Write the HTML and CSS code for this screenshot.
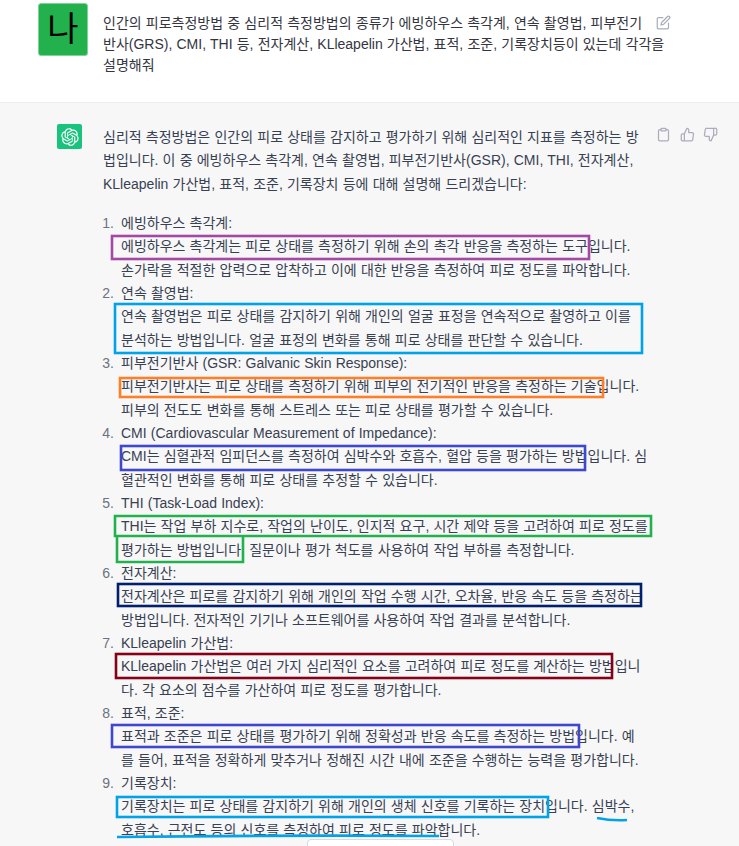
FILE: index.html
```html
<!DOCTYPE html>
<html lang="ko">
<head>
  <meta charset="UTF-8" />
  <meta name="viewport" content="width=device-width, initial-scale=1.0"/>
  <title>피로측정방법</title>
  <link rel="stylesheet" href="styles.css">
</head>

<body>
  <!-- User question -->
  <section class="msg msg-user">
    <div class="avatar-user">나</div>
    <p class="user-text">
      인간의 피로측정방법 중 심리적 측정방법의 종류가 에빙하우스 촉각계, 연속 촬영법, 피부전기<br>
      반사(GRS), CMI, THI 등, 전자계산, KLleapelin 가산법, 표적, 조준, 기록장치등이 있는데 각각을<br>
      설명해줘
    </p>
    <svg class="icon icon-edit" viewBox="0 0 24 24">
      <path d="M11 4H4a2 2 0 0 0-2 2v14a2 2 0 0 0 2 2h14a2 2 0 0 0 2-2v-7"/>
      <path d="M18.5 2.5a2.121 2.121 0 0 1 3 3L12 15l-4 1 1-4 9.5-9.5z"/>
    </svg>
  </section>

  <!-- Assistant answer -->
  <section class="msg msg-bot">
    <div class="avatar-bot">
      <svg viewBox="0 0 41 41">
        <path fill="#fff" d="M37.5324 16.8707C37.9808 15.5241 38.1363 14.0974 37.9886 12.6859C37.8409 11.2744 37.3934 9.91076 36.676 8.68622C35.6126 6.83404 33.9882 5.3676 32.0373 4.4985C30.0864 3.62941 27.9098 3.40259 25.8215 3.85078C24.8796 2.7893 23.7219 1.94125 22.4257 1.36341C21.1295 0.785575 19.7249 0.491269 18.3058 0.500197C16.1708 0.495044 14.0893 1.16803 12.3614 2.42214C10.6335 3.67624 9.34853 5.44666 8.6917 7.47815C7.30085 7.76286 5.98686 8.3414 4.8377 9.17505C3.68854 10.0087 2.73073 11.0782 2.02839 12.312C0.956464 14.1591 0.498905 16.2988 0.721698 18.4228C0.944492 20.5467 1.83612 22.5449 3.268 24.1293C2.81966 25.4759 2.66413 26.9026 2.81182 28.3141C2.95951 29.7256 3.40701 31.0892 4.12437 32.3138C5.18791 34.1659 6.8123 35.6322 8.76321 36.5013C10.7141 37.3704 12.8907 37.5973 14.9789 37.1492C15.9208 38.2107 17.0786 39.0587 18.3747 39.6366C19.6709 40.2144 21.0755 40.5087 22.4946 40.4998C24.6307 40.5054 26.7133 39.8321 28.4418 38.5772C30.1704 37.3223 31.4556 35.5506 32.1119 33.5179C33.5027 33.2332 34.8167 32.6547 35.9659 31.821C37.115 30.9874 38.0728 29.9178 38.7752 28.684C39.8458 26.8371 40.3023 24.6979 40.0789 22.5748C39.8556 20.4517 38.9639 18.4544 37.5324 16.8707ZM22.4978 37.8849C20.7443 37.8874 19.0459 37.2733 17.6994 36.1501C17.7601 36.117 17.8666 36.0586 17.936 36.0161L25.9004 31.4156C26.1003 31.3019 26.2663 31.137 26.3813 30.9378C26.4964 30.7386 26.5563 30.5124 26.5549 30.2825V19.0542L29.9213 20.998C29.9389 21.0068 29.9541 21.0198 29.9656 21.0359C29.977 21.052 29.9842 21.0707 29.9867 21.0902V30.3889C29.9842 32.375 29.1946 34.2791 27.7909 35.6841C26.3872 37.0892 24.4838 37.8806 22.4978 37.8849ZM6.39227 31.0064C5.51397 29.4888 5.19742 27.7107 5.49804 25.9832C5.55718 26.0187 5.66048 26.0818 5.73461 26.1244L13.699 30.7248C13.8975 30.8408 14.1233 30.902 14.3532 30.902C14.583 30.902 14.8088 30.8408 15.0073 30.7248L24.731 25.1103V28.9979C24.7321 29.0177 24.7283 29.0376 24.7199 29.0556C24.7115 29.0736 24.6988 29.0893 24.6829 29.1012L16.6317 33.7497C14.9096 34.7416 12.8643 35.0097 10.9447 34.4954C9.02506 33.9811 7.38785 32.7263 6.39227 31.0064ZM4.29707 13.6194C5.17156 12.0998 6.55279 10.9364 8.19885 10.3327C8.19885 10.4013 8.19491 10.5228 8.19491 10.6071V19.808C8.19351 20.0378 8.25334 20.2638 8.36823 20.4629C8.48312 20.6619 8.64893 20.8267 8.84863 20.9404L18.5723 26.5542L15.206 28.4979C15.1894 28.5089 15.1703 28.5155 15.1505 28.5173C15.1307 28.5191 15.1107 28.516 15.0924 28.5082L7.04046 23.8557C5.32135 22.8601 4.06716 21.2235 3.55289 19.3046C3.03862 17.3858 3.30624 15.3413 4.29707 13.6194ZM31.955 20.0556L22.2312 14.4411L25.5976 12.4981C25.6142 12.4872 25.6333 12.4805 25.6531 12.4787C25.6729 12.4769 25.6928 12.4801 25.7111 12.4879L33.7631 17.1364C34.9967 17.849 36.0017 18.8982 36.6606 20.1613C37.3194 21.4244 37.6047 22.849 37.4832 24.2684C37.3617 25.6878 36.8382 27.0432 35.9743 28.1759C35.1103 29.3086 33.9415 30.1717 32.6047 30.6641C32.6047 30.5947 32.6047 30.4733 32.6047 30.3889V21.188C32.6066 20.9586 32.5474 20.7328 32.4332 20.5338C32.319 20.3348 32.154 20.1698 31.955 20.0556ZM35.3055 15.0128C35.2464 14.9765 35.1431 14.9142 35.069 14.8717L27.1045 10.2712C26.906 10.1554 26.6803 10.0943 26.4504 10.0943C26.2206 10.0943 25.9948 10.1554 25.7963 10.2712L16.0726 15.8858V11.9982C16.0715 11.9783 16.0753 11.9585 16.0837 11.9405C16.0921 11.9225 16.1048 11.9068 16.1207 11.8949L24.1719 7.25025C25.4053 6.53903 26.8158 6.19376 28.2383 6.25482C29.6608 6.31589 31.0364 6.78077 32.2044 7.59508C33.3723 8.40939 34.2842 9.53945 34.8334 10.8531C35.3826 12.1667 35.5464 13.6095 35.3055 15.0128ZM14.2424 21.9419L10.8752 19.9981C10.8576 19.9893 10.8423 19.9763 10.8309 19.9602C10.8195 19.9441 10.8122 19.9254 10.8098 19.9058V10.6071C10.8107 9.18295 11.2173 7.78848 11.9819 6.58696C12.7466 5.38544 13.8377 4.42659 15.1275 3.82264C16.4173 3.21869 17.8524 2.99464 19.2649 3.1767C20.6775 3.35876 22.0089 3.93941 23.1034 4.85067C23.0427 4.88379 22.937 4.94215 22.8668 4.98473L14.9024 9.58517C14.7025 9.69878 14.5366 9.86356 14.4215 10.0626C14.3065 10.2616 14.2466 10.4877 14.2479 10.7175L14.2424 21.9419ZM16.071 17.9991L20.4018 15.4978L24.7325 17.9975V22.9985L20.4018 25.4983L16.071 22.9985V17.9991Z"/>
      </svg>
    </div>

    <div class="answer">
      <p class="intro">
        심리적 측정방법은 인간의 피로 상태를 감지하고 평가하기 위해 심리적인 지표를 측정하는 방<br>
        법입니다. 이 중 에빙하우스 촉각계, 연속 촬영법, 피부전기반사(GSR), CMI, THI, 전자계산,<br>
        KLleapelin 가산법, 표적, 조준, 기록장치 등에 대해 설명해 드리겠습니다:
      </p>
      <ol class="items">
        <li>에빙하우스 촉각계:<br>
          에빙하우스 촉각계는 피로 상태를 측정하기 위해 손의 촉각 반응을 측정하는 도구입니다.<br>
          손가락을 적절한 압력으로 압착하고 이에 대한 반응을 측정하여 피로 정도를 파악합니다.</li>
        <li>연속 촬영법:<br>
          연속 촬영법은 피로 상태를 감지하기 위해 개인의 얼굴 표정을 연속적으로 촬영하고 이를<br>
          분석하는 방법입니다. 얼굴 표정의 변화를 통해 피로 상태를 판단할 수 있습니다.</li>
        <li>피부전기반사 (GSR: Galvanic Skin Response):<br>
          피부전기반사는 피로 상태를 측정하기 위해 피부의 전기적인 반응을 측정하는 기술입니다.<br>
          피부의 전도도 변화를 통해 스트레스 또는 피로 상태를 평가할 수 있습니다.</li>
        <li>CMI (Cardiovascular Measurement of Impedance):<br>
          CMI는 심혈관적 임피던스를 측정하여 심박수와 호흡수, 혈압 등을 평가하는 방법입니다. 심<br>
          혈관적인 변화를 통해 피로 상태를 추정할 수 있습니다.</li>
        <li>THI (Task-Load Index):<br>
          THI는 작업 부하 지수로, 작업의 난이도, 인지적 요구, 시간 제약 등을 고려하여 피로 정도를<br>
          평가하는 방법입니다. 질문이나 평가 척도를 사용하여 작업 부하를 측정합니다.</li>
        <li>전자계산:<br>
          전자계산은 피로를 감지하기 위해 개인의 작업 수행 시간, 오차율, 반응 속도 등을 측정하는<br>
          방법입니다. 전자적인 기기나 소프트웨어를 사용하여 작업 결과를 분석합니다.</li>
        <li>KLleapelin 가산법:<br>
          KLleapelin 가산법은 여러 가지 심리적인 요소를 고려하여 피로 정도를 계산하는 방법입니<br>
          다. 각 요소의 점수를 가산하여 피로 정도를 평가합니다.</li>
        <li>표적, 조준:<br>
          표적과 조준은 피로 상태를 평가하기 위해 정확성과 반응 속도를 측정하는 방법입니다. 예<br>
          를 들어, 표적을 정확하게 맞추거나 정해진 시간 내에 조준을 수행하는 능력을 평가합니다.</li>
        <li>기록장치:<br>
          기록장치는 피로 상태를 감지하기 위해 개인의 생체 신호를 기록하는 장치입니다. 심박수,<br>
          호흡수, 근전도 등의 신호를 측정하여 피로 정도를 파악합니다.</li>
      </ol>
    </div>

    <div class="actions">
      <svg class="icon" viewBox="0 0 24 24">
        <path d="M16 4h2a2 2 0 0 1 2 2v14a2 2 0 0 1-2 2H6a2 2 0 0 1-2-2V6a2 2 0 0 1 2-2h2"/>
        <rect x="8" y="2" width="8" height="4" rx="1"/>
      </svg>
      <svg class="icon" viewBox="0 0 24 24">
        <path d="M14 9V5a3 3 0 0 0-3-3l-4 9v11h11.28a2 2 0 0 0 2-1.7l1.38-9a2 2 0 0 0-2-2.3zM7 22H4a2 2 0 0 1-2-2v-7a2 2 0 0 1 2-2h3"/>
      </svg>
      <svg class="icon" viewBox="0 0 24 24">
        <path d="M10 15v4a3 3 0 0 0 3 3l4-9V2H5.72a2 2 0 0 0-2 1.7l-1.38 9a2 2 0 0 0 2 2.3zm7-13h2.67A2.31 2.31 0 0 1 22 4v7a2.31 2.31 0 0 1-2.33 2H17"/>
      </svg>
    </div>
  </section>

  <!-- Top edge of the floating button, cut off by the window -->
  <div class="float-btn"></div>

  <!-- Hand-drawn marks on top of the screenshot -->
  <svg class="marks" viewBox="0 0 739 846">
    <rect class="purple" x="112" y="236" width="477" height="23"/>
    <rect class="blue" x="115" y="304" width="527" height="49"/>
    <rect class="orange" x="120" y="378" width="483" height="19"/>
    <rect class="indigo" x="121" y="446" width="464" height="24"/>
    <path class="green" d="M115 516H651V536H115ZM117 536V562H243V536"/>
    <rect class="navy" x="118" y="584" width="523" height="22"/>
    <rect class="maroon" x="116" y="654" width="496" height="24"/>
    <rect class="indigo" x="112" y="725" width="467" height="22"/>
    <rect class="blue" x="117" y="797" width="431" height="20"/>
    <path class="blue" d="M597 818Q612 821 627 820"/>
    <path class="blue" d="M117 837Q280 835 439 836"/>
  </svg>
</body>
</html>
```

FILE: styles.css
```css
* {
  margin: 0;
  padding: 0;
  box-sizing: border-box;
}
html, body {
  height: 846px;
  overflow: hidden;
}
body {
  position: relative;
  font-family: "Liberation Sans", "Noto Sans CJK KR", sans-serif;
  font-size: 14px;
  word-spacing: 0.3px;
  color: #374151;
  background: #f7f7f8;
}

/* Message rows */
.msg {
  display: flex;
  align-items: flex-start;
}
.msg-user {
  height: 103px;
  background: #fff;
  border-bottom: 1px solid #ececf1;
  padding: 3px 0 0 38px;
}
.msg-bot {
  padding: 21px 0 0 57px;
}

/* Avatars */
.avatar-user {
  flex: none;
  width: 50px;
  height: 53px;
  margin-right: 15px;
  border: 1px solid #7fd29a;
  border-radius: 3px;
  background: #22b14c;
  color: #000;
  font-size: 34px;
  line-height: 50px;
  text-align: center;
}
.avatar-bot {
  flex: none;
  display: flex;
  align-items: center;
  justify-content: center;
  width: 25px;
  height: 25px;
  margin-right: 21px;
  border-radius: 2px;
  background: #19c37d;
}
.avatar-bot svg {
  width: 18px;
  height: 18px;
}

/* Text */
.user-text {
  flex: none;
  width: 539px;
  padding-top: 10px;
  line-height: 21px;
  color: #343541;
  white-space: nowrap;
}
.answer {
  flex: none;
  width: 539px;
  padding-top: 2px;
  line-height: 23.33px;
  white-space: nowrap;
}
.intro {
  margin-bottom: 16px;
}
.items {
  padding-left: 18px;
}
.items li::marker {
  content: counter(list-item) ".\2002";
  color: #6b7280;
}

/* Icons */
.icon {
  flex: none;
  width: 15px;
  height: 15px;
  fill: none;
  stroke: #acacbe;
  stroke-width: 2;
  stroke-linecap: round;
  stroke-linejoin: round;
}
.icon-edit {
  margin: 11.5px 0 0 13.5px;
}
.actions {
  display: flex;
  gap: 8.5px;
  margin: 2.5px 0 0 14px;
}

/* Button peeking in at the bottom */
.float-btn {
  position: absolute;
  left: 307px;
  top: 839px;
  width: 147px;
  height: 30px;
  background: #fff;
  border: 1px solid #d9d9e3;
  border-radius: 4px;
}

/* Annotation overlay */
.marks {
  position: absolute;
  left: 0;
  top: 0;
  width: 739px;
  height: 846px;
  fill: none;
  stroke-width: 2.6;
}
.purple { stroke: #a349a4; }
.blue { stroke: #00a2e8; }
.orange { stroke: #ff7f27; }
.indigo { stroke: #3f48cc; }
.green { stroke: #22b14c; }
.navy { stroke: #00206b; }
.maroon { stroke: #880015; }
```
